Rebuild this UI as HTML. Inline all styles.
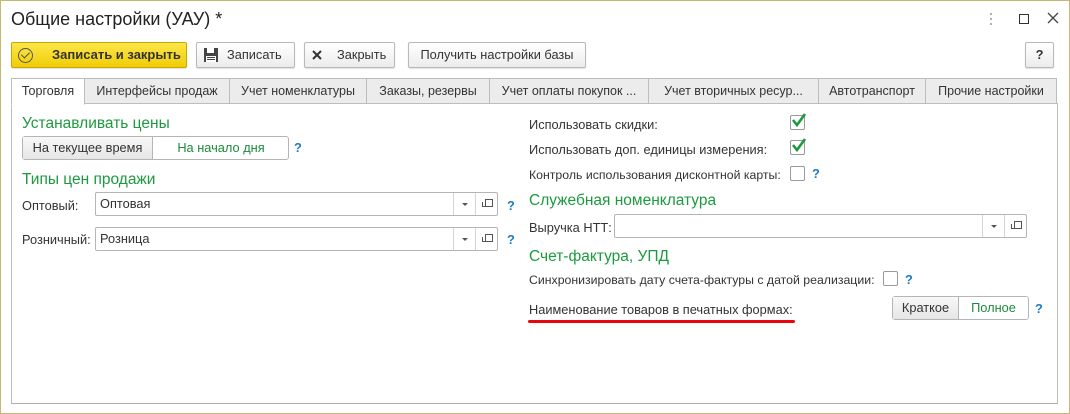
<!DOCTYPE html>
<html><head><meta charset="utf-8"><style>
*{margin:0;padding:0;box-sizing:border-box}
body{width:1070px;height:414px;overflow:hidden;background:#fff;font-family:"Liberation Sans",Arial,sans-serif;font-size:12.8px;color:#333;position:relative}
.win{position:absolute;left:0;top:0;width:1070px;height:414px;border:1px solid #c9b66f}
.a{position:absolute;white-space:nowrap}
.btn{position:absolute;height:26px;border:1px solid #b9b9b9;border-radius:2px;background:linear-gradient(#fff,#ececec);line-height:24px;color:#333;text-align:center;box-shadow:0 1px 1px rgba(0,0,0,.12)}
.tab{position:absolute;top:78px;height:26px;border:1px solid #bdbdbd;background:#ececec;line-height:24px;text-align:center;color:#333;font-size:12.5px}
.h{position:absolute;color:#1c9a3f;font-size:15.5px;white-space:nowrap}
.q{position:absolute;color:#1d7bc7;font-weight:bold}
.inp{position:absolute;height:24px;border:1px solid #b5b5b5;border-radius:2px;background:#fff;line-height:22px;padding-left:4px}
.dd{position:absolute;top:0;width:22px;height:22px;border-left:1px solid #d5d5d5}
.dd:after{content:"";position:absolute;left:8px;top:10px;border:3px solid transparent;border-top:3px solid #555}
.op{position:absolute;top:0;width:22px;height:22px;border-left:1px solid #d5d5d5}
.op:before{content:"";position:absolute;left:9px;top:6px;width:6px;height:6px;border:1px solid #555}
.op:after{content:"";position:absolute;left:6px;top:9px;width:4px;height:4px;border-left:1px solid #555;border-bottom:1px solid #555}
.cb{position:absolute;width:15px;height:15px;border:1px solid #9a9a9a;border-radius:2px;background:#fff}
</style></head><body>
<div class="win"></div>
<div class="a" style="left:11px;top:9px;font-size:18px;color:#222">Общие настройки (УАУ) *</div>
<svg class="a" style="left:989px;top:12px" width="4" height="14"><circle cx="2" cy="2" r="1" fill="#999"/><circle cx="2" cy="7" r="1" fill="#999"/><circle cx="2" cy="12" r="1" fill="#999"/></svg>
<div class="a" style="left:1019px;top:14px;width:10px;height:10px;border:1.5px solid #333"></div>
<svg class="a" style="left:1047px;top:12px" width="12" height="12"><path d="M1 1L11 11M11 1L1 11" stroke="#444" stroke-width="1.3"/></svg>

<div class="btn" style="left:11px;top:42px;width:176px;background:linear-gradient(#fde64a,#f0cd06);border-color:#c9a800;font-weight:bold;color:#333;text-align:left;padding-left:40px;font-size:13px">Записать и закрыть</div>
<div class="a" style="left:18px;top:48px;width:15px;height:15px;border:1.5px solid #555;border-radius:50%"></div>
<div class="a" style="left:23px;top:50px;width:5px;height:8px;border-right:1.5px solid #555;border-bottom:1.5px solid #555;transform:rotate(45deg)"></div>
<div class="btn" style="left:196px;top:42px;width:99px;text-align:left;padding-left:30px">Записать</div>
<svg class="a" style="left:203px;top:47px" width="16" height="16"><rect x="1" y="1" width="14" height="14" fill="#444"/><rect x="4" y="1" width="7" height="5" fill="#fff"/><rect x="3" y="9" width="10" height="6" fill="#fff"/><rect x="4" y="10" width="8" height="1" fill="#444"/><rect x="4" y="12" width="8" height="1" fill="#444"/></svg>
<div class="btn" style="left:304px;top:42px;width:91px;text-align:left;padding-left:32px">Закрыть</div>
<svg class="a" style="left:312px;top:50px" width="10" height="10"><path d="M1 1L9 9M9 1L1 9" stroke="#333" stroke-width="2"/></svg>
<div class="btn" style="left:408px;top:42px;width:178px">Получить настройки базы</div>
<div class="btn" style="left:1025px;top:42px;width:29px;font-weight:bold">?</div>

<div class="a" style="left:11px;top:103px;width:1047px;height:301px;border:1px solid #bdbdbd;border-bottom-color:#aaa"></div>
<div class="tab" style="left:11px;width:74px;background:#fff;border-bottom-color:#fff;height:27px">Торговля</div>
<div class="tab" style="left:84px;width:146px">Интерфейсы продаж</div>
<div class="tab" style="left:229px;width:138px">Учет номенклатуры</div>
<div class="tab" style="left:366px;width:124px">Заказы, резервы</div>
<div class="tab" style="left:489px;width:160px">Учет оплаты покупок ...</div>
<div class="tab" style="left:648px;width:171px">Учет вторичных ресур...</div>
<div class="tab" style="left:818px;width:108px">Автотранспорт</div>
<div class="tab" style="left:925px;width:132px">Прочие настройки</div>

<div class="h" style="left:22px;top:115px">Устанавливать цены</div>
<div class="a" style="left:22px;top:136px;width:267px;height:24px;border:1px solid #b5b5b5;border-radius:3px;background:#fff"></div>
<div class="a" style="left:23px;top:137px;width:130px;height:22px;background:linear-gradient(#f8f8f8,#e6e6e6);border-right:1px solid #b5b5b5;line-height:22px;text-align:center">На текущее время</div>
<div class="a" style="left:153px;top:137px;width:136px;line-height:22px;text-align:center;color:#1c8a3c">На начало дня</div>
<div class="q" style="left:294px;top:140px">?</div>

<div class="h" style="left:22px;top:171px">Типы цен продажи</div>
<div class="a" style="left:22px;top:198px">Оптовый:</div>
<div class="inp" style="left:95px;top:192px;width:403px">Оптовая<div class="dd" style="left:357px"></div><div class="op" style="left:379px"></div></div>
<div class="q" style="left:507px;top:198px">?</div>
<div class="a" style="left:22px;top:232px">Розничный:</div>
<div class="inp" style="left:95px;top:227px;width:403px">Розница<div class="dd" style="left:357px"></div><div class="op" style="left:379px"></div></div>
<div class="q" style="left:507px;top:232px">?</div>

<div class="a" style="left:529px;top:117px">Использовать скидки:</div>
<div class="cb" style="left:790px;top:115px"></div><svg class="a" style="left:791px;top:112px" width="16" height="16"><path d="M2 8L6 13L14 2" stroke="#1c9a3f" stroke-width="2.6" fill="none"/></svg>
<div class="a" style="left:529px;top:142px">Использовать доп. единицы измерения:</div>
<div class="cb" style="left:790px;top:140px"></div><svg class="a" style="left:791px;top:137px" width="16" height="16"><path d="M2 8L6 13L14 2" stroke="#1c9a3f" stroke-width="2.6" fill="none"/></svg>
<div class="a" style="left:529px;top:168px;font-size:12.3px">Контроль использования дисконтной карты:</div>
<div class="cb" style="left:790px;top:166px"></div>
<div class="q" style="left:812px;top:166px">?</div>

<div class="h" style="left:529px;top:192px">Служебная номенклатура</div>
<div class="a" style="left:529px;top:220px">Выручка НТТ:</div>
<div class="inp" style="left:614px;top:214px;width:413px"><div class="dd" style="left:367px"></div><div class="op" style="left:389px"></div></div>

<div class="h" style="left:529px;top:248px">Счет-фактура, УПД</div>
<div class="a" style="left:529px;top:273px;font-size:12.3px">Синхронизировать дату счета-фактуры с датой реализации:</div>
<div class="cb" style="left:883px;top:271px"></div>
<div class="q" style="left:905px;top:272px">?</div>
<div class="a" style="left:529px;top:302px">Наименование товаров в печатных формах:</div>
<div class="a" style="left:528px;top:320px;width:267px;height:3px;background:#e8060b;border-radius:2px"></div>
<div class="a" style="left:892px;top:296px;width:137px;height:24px;border:1px solid #b5b5b5;border-radius:3px;background:#fff"></div>
<div class="a" style="left:893px;top:297px;width:66px;height:22px;background:linear-gradient(#f8f8f8,#e6e6e6);border-right:1px solid #b5b5b5;line-height:22px;text-align:center">Краткое</div>
<div class="a" style="left:959px;top:297px;width:69px;line-height:22px;text-align:center;color:#1c8a3c">Полное</div>
<div class="q" style="left:1035px;top:301px">?</div>
</body></html>
